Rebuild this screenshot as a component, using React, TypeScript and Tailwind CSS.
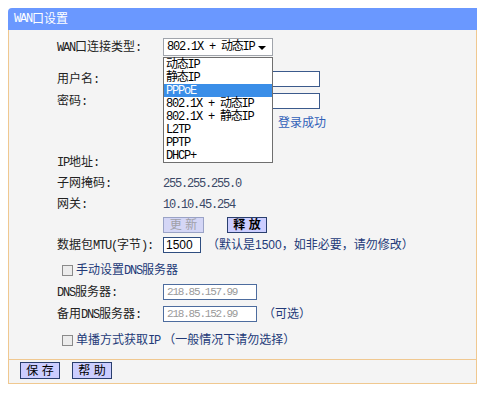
import React from "react";

const LABEL = "w-[106px] shrink-0 text-[12px] text-[#222] leading-none";
const FONT = { fontFamily: '"Liberation Sans", "Noto Sans CJK SC", sans-serif' };
const MONO = "font-['Liberation_Mono','Noto_Sans_CJK_SC',monospace] tracking-[-1.2px]";
const NARROW = "font-['Liberation_Mono',monospace] tracking-[-1.2px]";

function T({ s }: { s: string }) {
  const parts = s.split(/([A-Za-z0-9().:+ ]+)/).filter((p) => p.length > 0);
  return (
    <>
      {parts.map((p, i) =>
        /^[A-Za-z0-9().:+ ]+$/.test(p) ? (
          <span key={i} className={NARROW}>
            {p}
          </span>
        ) : (
          <span key={i}>{p}</span>
        )
      )}
    </>
  );
}

function Row({ h, children }: { h: string; children?: React.ReactNode }) {
  return <div className={`flex items-center pl-[48px] ${h}`}>{children}</div>;
}

function Check({ children }: { children: React.ReactNode }) {
  return (
    <div className="flex items-center pl-[53px] h-[22px]">
      <div className="w-[11px] h-[11px] border border-[#8a8a8a] bg-[#ececec] mr-[3px]" />
      <span className="text-[12px] text-[#233a78] leading-none whitespace-pre">{children}</span>
    </div>
  );
}

export default function App() {
  const items = ["动态IP", "静态IP", "PPPoE", "802.1X + 动态IP", "802.1X + 静态IP", "L2TP", "PPTP", "DHCP+"];
  return (
    <div className="relative w-[500px] h-[393px] bg-white overflow-hidden pt-[8px] pl-[8px]" style={FONT}>
      <div className="w-[469px]">
        <div className="h-[22px] bg-[#6a98ff] rounded-tl-[4px] text-white text-[12px] flex items-center pl-[6px] leading-none">
          <T s="WAN口设置" />
        </div>
        <div className="border-x border-[#f0c890] bg-[#f4f4f4] h-[329px] pt-[7px] flex flex-col">
          <Row h="h-[20px]">
            <span className={LABEL}>
              <T s="WAN口连接类型:" />
            </span>
            <div className="w-[110px] h-[18px] bg-white border border-[#a0a4ab] flex items-center pl-[3px] relative">
              <span className={`text-[12px] text-black leading-none ${MONO}`}>802.1X + 动态IP</span>
              <div className="absolute right-[6px] top-[7px] w-0 h-0 border-x-[4px] border-x-transparent border-t-[4px] border-t-black" />
            </div>
          </Row>
          <div className="h-[11px]" />
          <Row h="h-[22px]">
            <span className={LABEL}>
              <T s="用户名:" />
            </span>
            <div className="w-[157px] h-[16px] bg-white border border-[#3b5a8c]" />
          </Row>
          <Row h="h-[22px]">
            <span className={LABEL}>
              <T s="密码:" />
            </span>
            <div className="w-[157px] h-[16px] bg-white border border-[#3b5a8c]" />
          </Row>
          <Row h="h-[22px]">
            <span className={LABEL}></span>
            <span className="ml-[115px] text-[12px] text-[#3060b8] leading-none">登录成功</span>
          </Row>
          <div className="h-[17px]" />
          <Row h="h-[22px]">
            <span className={LABEL}>
              <T s="IP地址:" />
            </span>
          </Row>
          <Row h="h-[21px]">
            <span className={LABEL}>
              <T s="子网掩码:" />
            </span>
            <span className={`text-[12px] text-[#3a4866] leading-none ${MONO}`}>255.255.255.0</span>
          </Row>
          <Row h="h-[21px]">
            <span className={LABEL}>
              <T s="网关:" />
            </span>
            <span className={`text-[12px] text-[#3a4866] leading-none ${MONO}`}>10.10.45.254</span>
          </Row>
          <Row h="h-[19px]">
            <span className={LABEL}></span>
            <div className="w-[41px] h-[16px] bg-[#d4d6f6] border border-[#9aa3c6] flex items-center justify-center text-[12px] text-[#a0a0a8] leading-none">
              更 新
            </div>
            <div className="ml-[23px] w-[40px] h-[16px] bg-[#ccceff] border border-[#2a3f6e] flex items-center justify-center text-[12px] text-black font-bold leading-none">
              释 放
            </div>
          </Row>
          <Row h="h-[22px]">
            <span className={LABEL}>
              <T s="数据包MTU(字节):" />
            </span>
            <div className="w-[38px] h-[16px] bg-white border border-[#2f4e80] flex items-center pl-[2px] text-[12px] text-black leading-none">
              1500
            </div>
            <span className="ml-[6px] text-[12px] text-[#233a78] leading-none">（默认是1500，如非必要，请勿修改）</span>
          </Row>
          <div className="h-[3px]" />
          <Check>
            <T s="手动设置DNS服务器" />
          </Check>
          <Row h="h-[22px]">
            <span className={LABEL}>
              <T s="DNS服务器:" />
            </span>
            <div className="w-[94px] h-[16px] bg-white border border-[#4d6c9e] flex items-center pl-[3px]">
              <span className={`text-[11px] text-[#9a9a9a] leading-none ${MONO}`}>218.85.157.99</span>
            </div>
          </Row>
          <Row h="h-[22px]">
            <span className={LABEL}>
              <T s="备用DNS服务器:" />
            </span>
            <div className="w-[94px] h-[16px] bg-white border border-[#4d6c9e] flex items-center pl-[3px]">
              <span className={`text-[11px] text-[#9a9a9a] leading-none ${MONO}`}>218.85.152.99</span>
            </div>
            <span className="ml-[6px] text-[12px] text-[#233a78] leading-none">（可选）</span>
          </Row>
          <div className="h-[4px]" />
          <Check>
            <T s="单播方式获取IP" />
            <span> （一般情况下请勿选择）</span>
          </Check>
        </div>
        <div className="h-[25px] border border-[#f0c890] bg-[#f4f4f4] flex items-start pt-[2px] pl-[11px]">
          <div className="w-[40px] h-[17px] bg-[#ccceff] border border-[#2a3f6e] flex items-center justify-center text-[12px] text-black leading-none">
            保 存
          </div>
          <div className="ml-[12px] w-[40px] h-[17px] bg-[#ccceff] border border-[#2a3f6e] flex items-center justify-center text-[12px] text-black leading-none">
            帮 助
          </div>
        </div>
      </div>

      <div className="absolute left-[163px] top-[57px] w-[110px] bg-white border border-[#6f6f6f]">
        {items.map((t, i) => (
          <div
            key={t}
            className={`h-[13px] flex items-center pl-[2px] text-[12px] leading-none ${MONO} ${
              i === 2 ? "bg-[#3a8ee8] text-white" : "text-black"
            }`}
          >
            {t}
          </div>
        ))}
      </div>
    </div>
  );
}
